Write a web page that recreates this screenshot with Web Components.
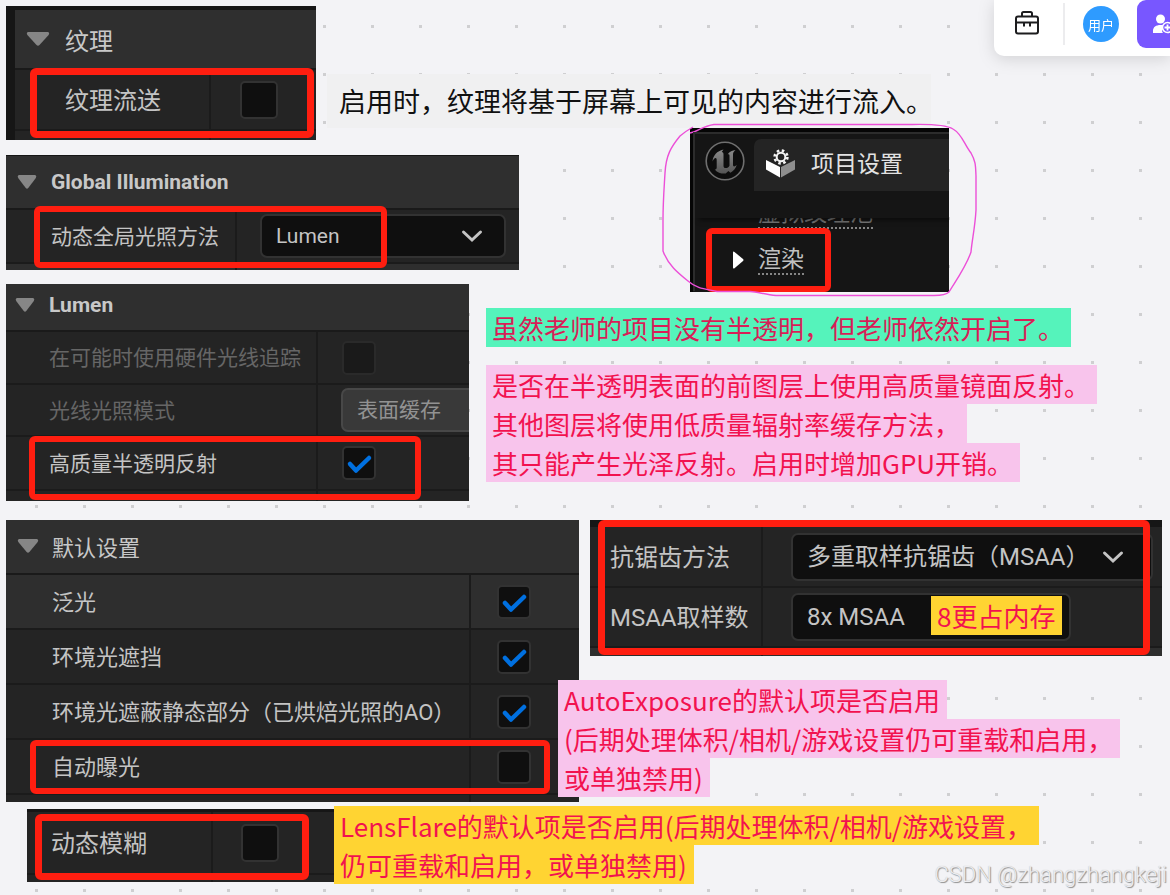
<!DOCTYPE html>
<html lang="zh-CN">
<head>
<meta charset="utf-8">
<title>渲染设置笔记</title>
<style>
html, body { margin: 0; }
body { font-family: Roboto, "Noto Sans CJK SC", sans-serif; background: #f3f3f6; }
</style>
</head>
<body>
<note-board>
  <board-item style="--x:6px;--y:6px;--w:310px">
    <ue-panel style="--h:134px;--font:24px;--split:196px;--gutter:9px;--top:4px;--indent:50px">
      <ue-head text="纹理" style="--h:60px;--arrow:11px;--aw:24px"></ue-head>
      <ue-row text="纹理流送" kind="check" style="--h:61px;--pad:29px;--box:38px"></ue-row>
      <ue-row style="--h:20px"></ue-row>
    </ue-panel>
    <red-mark style="--x:24px;--y:62px;--w:284px;--h:70px"></red-mark>
  </board-item>

  <board-item style="--x:327px;--y:74px">
    <board-note tone="plain"><p>启用时，纹理将基于屏幕上可见的内容进行流入。</p></board-note>
  </board-item>

  <board-item style="--x:6px;--y:155px;--w:513px">
    <ue-panel style="--h:115px;--font:21px;--split:231px;--indent:45px;--top:1px">
      <ue-head text="Global Illumination" style="--h:54px;--arrow:11px;--aw:20px"></ue-head>
      <ue-row text="动态全局光照方法" kind="select" value="Lumen" style="--h:54px;--pad:23px;--sw:246px;--sh:44px"></ue-row>
      <ue-row tone="light" style="--h:20px"></ue-row>
    </ue-panel>
    <red-mark style="--x:28px;--y:51px;--w:353px;--h:62px;--b:6px"></red-mark>
  </board-item>

  <board-item style="--x:6px;--y:284px;--w:463px">
    <ue-panel style="--h:217px;--font:21px;--split:312px;--indent:43px">
      <ue-head text="Lumen" style="--h:48px;--arrow:9px;--aw:20px;--lift:4px"></ue-head>
      <ue-row text="在可能时使用硬件光线追踪" kind="check" dim style="--h:53px;--pad:24px;--box:34px"></ue-row>
      <ue-row text="光线光照模式" kind="select" value="表面缓存" dim style="--h:52px;--pad:23px;--sw:200px;--sh:44px"></ue-row>
      <ue-row text="高质量半透明反射" kind="check" checked style="--h:54px;--pad:24px;--box:34px"></ue-row>
      <ue-row style="--h:20px"></ue-row>
    </ue-panel>
    <red-mark style="--x:23px;--y:152px;--w:392px;--h:64px;--b:6px"></red-mark>
  </board-item>

  <board-item style="--x:690px;--y:128px;--w:259px">
    <ue-window></ue-window>
    <red-mark style="--x:16px;--y:100px;--w:125px;--h:64px;--b:6px"></red-mark>
  </board-item>
  <board-item style="--x:660px;--y:122px;--w:320px"><pen-loop></pen-loop></board-item>

  <board-item style="--x:486px;--y:308px">
    <board-note tone="green"><p>虽然老师的项目没有半透明，但老师依然开启了。</p></board-note>
  </board-item>
  <board-item style="--x:486px;--y:365px">
    <board-note tone="pink">
      <p>是否在半透明表面的前图层上使用高质量镜面反射。</p>
      <p>其他图层将使用低质量辐射率缓存方法，</p>
      <p>其只能产生光泽反射。启用时增加GPU开销。</p>
    </board-note>
  </board-item>

  <board-item style="--x:6px;--y:520px;--w:573px">
    <ue-panel style="--h:282px;--font:22px;--split:465px;--indent:46px">
      <ue-head text="默认设置" style="--h:55px;--arrow:11px;--aw:22px;--lift:2px"></ue-head>
      <ue-row text="泛光" kind="check" checked tone="light" style="--h:55px;--pad:26px;--box:34px"></ue-row>
      <ue-row text="环境光遮挡" kind="check" checked style="--h:55px;--pad:26px;--box:34px"></ue-row>
      <ue-row text="环境光遮蔽静态部分（已烘焙光照的AO）" kind="check" checked style="--h:55px;--pad:26px;--box:34px"></ue-row>
      <ue-row text="自动曝光" kind="check" style="--h:55px;--pad:26px;--box:34px"></ue-row>
      <ue-row style="--h:20px"></ue-row>
    </ue-panel>
    <red-mark style="--x:24px;--y:220px;--w:520px;--h:54px;--b:6px"></red-mark>
  </board-item>

  <board-item style="--x:590px;--y:520px;--w:572px">
    <ue-panel style="--h:136px;--font:24px;--split:173px;--indent:20px;--top:7px">
      <ue-row text="抗锯齿方法" kind="select" value="多重取样抗锯齿（MSAA）" style="--h:61px;--pad:28px;--sw:362px;--sh:48px;--chev:29px"></ue-row>
      <ue-row text="MSAA取样数" kind="select" value="8x MSAA" style="--h:60px;--pad:28px;--sw:280px;--sh:48px"></ue-row>
      <ue-row tone="light" style="--h:20px"></ue-row>
    </ue-panel>
    <red-mark style="--x:8px;--y:0px;--w:552px;--h:135px"></red-mark>
  </board-item>
  <board-item style="--x:931px;--y:596px">
    <board-note tone="yellow"><p>8更占内存</p></board-note>
  </board-item>

  <board-item style="--x:558px;--y:680px">
    <board-note tone="pink">
      <p>AutoExposure的默认项是否启用</p>
      <p>(后期处理体积/相机/游戏设置仍可重载和启用，</p>
      <p>或单独禁用)</p>
    </board-note>
  </board-item>

  <board-item style="--x:27px;--y:809px;--w:308px">
    <ue-panel style="--h:73px;--font:24px;--split:186px;--indent:24px;--top:3px">
      <ue-row text="动态模糊" kind="check" style="--h:63px;--pad:28px;--box:38px"></ue-row>
      <ue-row style="--h:20px"></ue-row>
    </ue-panel>
    <red-mark style="--x:8px;--y:5px;--w:274px;--h:66px"></red-mark>
  </board-item>
  <board-item style="--x:334px;--y:806px">
    <board-note tone="yellow">
      <p>LensFlare的默认项是否启用(后期处理体积/相机/游戏设置，</p>
      <p>仍可重载和启用，或单独禁用)</p>
    </board-note>
  </board-item>

  <top-tools slot="tools"></top-tools>
  <page-mark slot="mark">CSDN @zhangzhangkeji</page-mark>
</note-board>

<script>
const define = (name, html, setup) => {
  const tpl = document.createElement('template');
  tpl.innerHTML = html;
  customElements.define(name, class extends HTMLElement {
    constructor() {
      super();
      this.attachShadow({ mode: 'open' }).append(tpl.content.cloneNode(true));
    }
    connectedCallback() { if (setup) setup(this, this.shadowRoot); }
  });
};

/* The free canvas with its dot grid. */
define('note-board', `<style>
:host { display: block; position: relative; min-height: 100vh; overflow: hidden;
  background: conic-gradient(from 90deg at 45px 45px, #cfcfd1 90deg, transparent 0) -10px -20px / 48px 48px, #f3f3f6; }
.tools { position: absolute; top: 0; right: 0; }
.mark { position: absolute; right: 3px; bottom: 5px; }
</style><slot></slot><div class="tools"><slot name="tools"></slot></div><div class="mark"><slot name="mark"></slot></div>`);

/* One item pinned to a place on the canvas. */
define('board-item', `<style>
:host { display: block; position: absolute; left: var(--x); top: var(--y); width: var(--w, max-content); }
</style><slot></slot>`);

define('red-mark', `<style>
:host { display: block; position: absolute; box-sizing: border-box; left: var(--x); top: var(--y);
  width: var(--w); height: var(--h); border: var(--b, 7px) solid #ff1e10; border-radius: 6px; pointer-events: none; }
</style>`);

define('board-note', `<style>
:host { display: block; font: 26px/39px "Noto Sans CJK SC", sans-serif; color: #f2124f; --bg: #f8c4ec; }
:host([tone=green]) { --bg: #55f3bb; color: #d81e57; }
:host([tone=yellow]) { --bg: #ffd432; }
:host([tone=plain]) { --bg: #f0f0f1; color: #111; font-size: 27px; line-height: 54px; padding: 0; }
::slotted(p) { margin: 0; padding: 0 7px 0 6px; width: max-content; background: var(--bg); }
:host([tone=plain]) ::slotted(p) { padding: 0 0 0 12px; width: 592px; white-space: nowrap; }
</style><slot></slot>`);

define('ue-panel', `<style>
:host { display: flex; flex-direction: column; box-sizing: border-box; height: var(--h); overflow: hidden;
  padding: var(--top, 0px) 0 0 var(--gutter, 0px); background: #161616; color: #c4c4c4; font-size: var(--font); }
</style><slot></slot>`);

define('ue-head', `<style>
:host { display: block; flex: none; }
button { display: flex; align-items: center; box-sizing: border-box; width: 100%; height: var(--h); padding: 0 0 var(--lift, 0px) var(--arrow);
  border: 0; border-bottom: 2px solid #1a1a1a; background: #2f2f2f; color: #c8c8c8; font: bold 1em Roboto, "Noto Sans CJK SC", sans-serif; text-align: left; }
button.cjk { font-weight: 400; }
svg { flex: none; width: var(--aw); height: 16px; }
span { flex: none; margin-left: calc(var(--indent) - var(--arrow) - var(--aw)); }
</style><button type="button" aria-expanded="true"><svg viewBox="0 0 24 16" preserveAspectRatio="none" aria-hidden="true"><path d="M2 1h20q2 1 .6 3L13.5 14q-1.500 1.500-3 0L1.400 4Q0 2 2 1z" fill="#868686"/></svg><span></span></button>`,
(el, root) => {
  const text = el.getAttribute('text');
  root.querySelector('span').textContent = text;
  root.querySelector('button').classList.toggle('cjk', /[\u4e00-\u9fff]/.test(text));
});

define('ue-row', `<style>
:host { display: grid; flex: none; grid-template-columns: var(--split) minmax(0, 1fr); box-sizing: border-box; height: var(--h);
  background: #242424; border-bottom: 2px solid #1b1b1b; }
:host([tone=light]) { background: #2e2e2e; }
:host([dim]) { color: #666; }
label { display: flex; align-items: center; padding: 0 0 3px var(--indent); white-space: nowrap; border-right: 2px solid #1b1b1b; }
.cell { display: flex; align-items: center; padding-left: var(--pad); }
.check, .pick { position: relative; display: flex; flex: none; }
.check svg { position: absolute; inset: 0; width: 100%; height: 100%; pointer-events: none; visibility: hidden; }
input:checked + svg { visibility: visible; }
input { appearance: none; box-sizing: border-box; width: var(--box); height: var(--box); margin: 0; background: #0f0f0f;
  border: 2px solid #323232; border-radius: 5px; }
:host([dim]) input { background: #1a1a1a; border-color: #2a2a2a; }
select { appearance: none; box-sizing: border-box; width: var(--sw); height: var(--sh); margin: 0; padding: 0 14px; font: inherit;
  color: #c4c4c4; background: #0f0f0f; border: 2px solid #323232; border-radius: 7px; }
:host([dim]) select { color: #929292; background: #393939; border-color: #484848; opacity: 1; }
.pick svg { position: absolute; right: var(--chev, 23px); top: 50%; width: 22px; height: 14px; margin-top: -7px; pointer-events: none; }
</style><label for="c"></label><div class="cell"></div>`,
(el, root) => {
  const label = root.querySelector('label'), cell = root.querySelector('.cell');
  const kind = el.getAttribute('kind'), dim = el.hasAttribute('dim') ? 'disabled' : '';
  label.textContent = el.getAttribute('text') || '';
  if (kind === 'check') {
    cell.innerHTML = `<span class="check"><input id="c" type="checkbox" ${dim} ${el.hasAttribute('checked') ? 'checked' : ''}>
      <svg viewBox="0 0 34 34" aria-hidden="true"><path d="M8 18l6 6.500L27 12" fill="none" stroke="#0070e0" stroke-width="4.500" stroke-linecap="round" stroke-linejoin="round"/></svg></span>`;
  } else if (kind === 'select') {
    cell.innerHTML = `<span class="pick"><select id="c" ${dim}><option></option></select>
      <svg viewBox="0 0 22 14" aria-hidden="true"><path d="M2.500 3l8.500 8 8.500-8" fill="none" stroke="#c4c4c4" stroke-width="3" stroke-linecap="round"/></svg></span>`;
    root.querySelector('option').textContent = el.getAttribute('value');
  }
});

/* Project settings window: title tab and the section list that scrolls under it. */
define('ue-window', `<style>
:host { display: block; height: 164px; overflow: hidden; box-sizing: border-box; background: #151515; color: #e2e2e2;
  border-left: 3px solid #050505; border-top: 4px solid #050505; font-size: 23px; }
header { position: relative; z-index: 1; display: flex; align-items: flex-start; box-sizing: border-box; padding: 5px 0 0 10px; gap: 9px; height: 86px;
  background: #151515; border-left: 2px solid #2c2c2c; border-top: 2px solid #2c2c2c; box-shadow: 6px 2px 5px #0008; }
.logo { flex: none; width: 40px; height: 40px; margin-top: 2px; }
.tab { flex: 1; display: flex; align-items: center; box-sizing: border-box; height: 52px; padding: 0 0 4px 12px; gap: 16px; background: #242424; border-radius: 7px 0 0 0; }
.tab svg { width: 29px; height: 29px; }
.tab span { padding-bottom: 2px; }
nav { display: block; margin-top: -18px; border-left: 2px solid #2c2c2c; }
.cut { display: flex; padding-left: 63px; }
a { color: #9c9c9c; text-decoration: none; border-bottom: 2px dotted #858585; line-height: 27px; }
.cut a { color: #777; }
.row { display: flex; align-items: center; height: 62px; padding-left: 37px; gap: 14px; }
.row a { color: #c0c0c0; }
.row svg { width: 12px; height: 18px; }
</style>
<header>
<svg class="logo" viewBox="0 0 40 40" aria-hidden="true"><defs><linearGradient id="g" x2="0" y2="1"><stop stop-color="#8a8a8a"/><stop offset="1" stop-color="#555"/></linearGradient></defs>
<circle cx="20" cy="20" r="18.800" fill="#0d0d0d" stroke="#6f6f6f" stroke-width="1.600"/>
<path d="M18.500 8.500C12 10 8 14.500 7.500 20.500c1.500-2.800 2.500-3.700 3.500-3.300.7.300.7 1.200.7 2.300v7c0 1.500-.8 2-2 2 3 3.500 7.500 4.500 11 4l2.700-2.500 2 1.700c3-1.700 5.500-4.500 6.300-7.700-1.300 1.200-2.300 1.700-3 1.200-.6-.4-.7-1-.7-2V13.500c0-2 1-3.300 2.500-4.500-3 .3-6 1.800-7.800 4.300 1.200-.2 1.800.2 1.800 1.500v10c-.8 1.500-2 2.300-3.700 2.300-1.600 0-2.300-.7-2.300-2.300V13.500c0-2-.7-2.600-1.800-2.600z" fill="url(#g)"/></svg>
<div class="tab"><svg viewBox="0 0 29 29" aria-hidden="true"><path d="M0 11l14 7v10.500L0 20.500z" fill="#fff"/><path d="M29 11l-14 7v10.500l14-8z" fill="#8e8e8e"/>
<circle cx="15" cy="8" r="8.500" fill="#242424"/><circle cx="15" cy="8" r="4.300" fill="none" stroke="#f4f4f4" stroke-width="2"/><circle cx="15" cy="8" r="6.400" fill="none" stroke="#f4f4f4" stroke-width="2.600" stroke-dasharray="2.500 2.530"/></svg><span>项目设置</span></div>
</header>
<nav><div class="cut"><a href="#vt">虚拟纹理池</a></div>
<div class="row"><svg viewBox="0 0 12 18" aria-hidden="true"><path d="M1 1.500Q1 0 2.500 1L11 8q1 1 0 2L2.500 17.200Q1 18 1 16.500z" fill="#fff"/></svg><a href="#render">渲染</a></div></nav>`);

/* Hand-drawn loop. */
define('pen-loop', `<style>:host { display: block; pointer-events: none; } svg { display: block; width: 100%; height: 176px; }</style>
<svg viewBox="660 122 320 176" aria-hidden="true"><path d="M690 133C698 132 702 126 714 124.500H912C934 124 948 126 953 129C962 134 964 144 971 153C976 162 975.500 166 976 176V210C975 228 972 240 971 252C966 267 955 282 949 292C946 295 940 295.500 934 295.500H776C765 295 758 291.500 750 291.500H717C706 289 697 289 688 281C678 273 668 265 663 251V220C663 202 664 190 665 173C666 155 671 147 680 136Q686 131 693 127" fill="none" stroke="#ec4fd8" stroke-width="1.400"/></svg>`);

define('top-tools', `<style>
:host { display: flex; align-items: center; box-sizing: border-box; width: 176px; height: 56px; padding: 0 0 8px 20px;
  background: #fff; border-radius: 0 0 0 10px; filter: drop-shadow(0 3px 8px #0002); }
button { flex: none; display: flex; align-items: center; justify-content: center; border: 0; padding: 0; background: none; }
.kit { width: 26px; height: 26px; margin-top: -3px; }
hr { flex: none; width: 2px; height: 42px; margin: 0 18px 0 23px; border: 0; background: #ececee; }
.me { width: 36px; height: 36px; border-radius: 50%; background: #2e9bff; color: #fff; font: 13px "Noto Sans CJK SC", sans-serif; }
.add { flex: 1; height: 48px; margin-left: 18px; overflow: hidden; border-radius: 9px 0 0 9px; background: #7857ff; justify-content: flex-start; padding-left: 15px; }
.add svg { flex: none; }
</style>
<button class="kit" type="button" aria-label="工具箱"><svg width="26" height="26" viewBox="0 0 26 26" fill="none" stroke="#1c1c1e" stroke-width="2"><rect x="2" y="6.500" width="22" height="17" rx="2"/><path d="M8 6V3.500q0-1.500 1.500-1.500h7Q18 2 18 3.500V6M2 12.500h22M10 12v4.500M16 12v4.500"/></svg></button>
<hr>
<button class="me" type="button">用户</button>
<button class="add" type="button" aria-label="邀请成员"><svg width="22" height="20" viewBox="0 0 22 20"><circle cx="8.500" cy="5" r="4.500" fill="#fff"/><path d="M1 19v-2c0-4 3-6 7.500-6 2 0 3 .3 4 1-3 2-3 5-1.500 7z" fill="#fff"/><circle cx="15.500" cy="13.500" r="5" fill="#7857ff" stroke="#fff" stroke-width="1.600"/><path d="M12.500 13.500h6M15.500 10.500v6" stroke="#fff" stroke-width="1.800"/></svg></button>`);

define('page-mark', `<style>:host { display: block; font: 300 22px/30px Roboto, sans-serif; color: #ededf0; text-shadow: 1px 1px 1px #8c8c8c, 0 0 1px #bbb; white-space: nowrap; }</style><slot></slot>`);
</script>
</body>
</html>
